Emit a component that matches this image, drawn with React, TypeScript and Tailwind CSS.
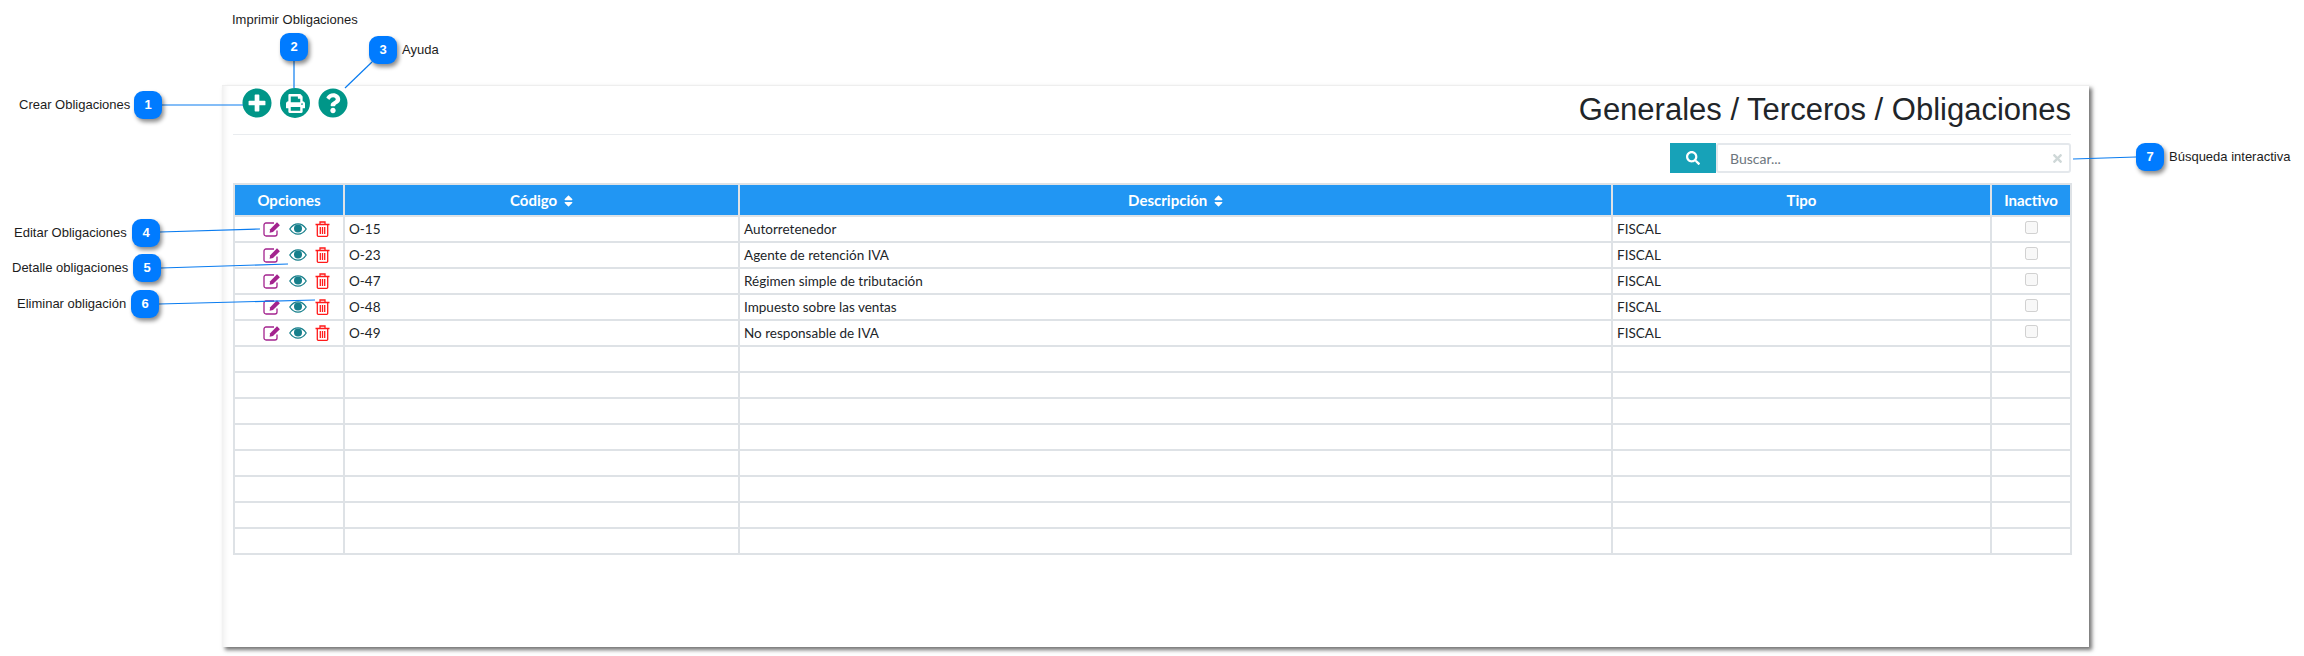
import React from 'react';
import { FaPlusCircle, FaPrint, FaQuestionCircle, FaSearch, FaSort, FaTimes } from 'react-icons/fa';

const rows = [
  { codigo: 'O-15', descripcion: 'Autorretenedor', tipo: 'FISCAL' },
  { codigo: 'O-23', descripcion: 'Agente de retención IVA', tipo: 'FISCAL' },
  { codigo: 'O-47', descripcion: 'Régimen simple de tributación', tipo: 'FISCAL' },
  { codigo: 'O-48', descripcion: 'Impuesto sobre las ventas', tipo: 'FISCAL' },
  { codigo: 'O-49', descripcion: 'No responsable de IVA', tipo: 'FISCAL' },
];

const emptyRows = [0, 1, 2, 3, 4, 5, 6, 7];

const callouts = [
  { n: 1, x: 134, y: 91, label: 'Crear Obligaciones', lx: 19, ly: 98 },
  { n: 2, x: 280, y: 33, label: 'Imprimir Obligaciones', lx: 232, ly: 13 },
  { n: 3, x: 369, y: 36, label: 'Ayuda', lx: 402, ly: 43 },
  { n: 4, x: 132, y: 219, label: 'Editar Obligaciones', lx: 14, ly: 226 },
  { n: 5, x: 133, y: 254, label: 'Detalle obligaciones', lx: 12, ly: 261 },
  { n: 6, x: 131, y: 290, label: 'Eliminar obligación', lx: 17, ly: 297 },
  { n: 7, x: 2136, y: 143, label: 'Búsqueda interactiva', lx: 2169, ly: 150 },
];

const lines = [
  [162, 105, 243, 105],
  [294, 61, 294, 88],
  [372, 62, 345, 88],
  [160, 232, 260, 229],
  [161, 268, 288, 264],
  [159, 304, 315, 300],
  [2073, 159, 2136, 157],
];

function Callouts() {
  return (
    <>
      <svg className="absolute left-0 top-0 pointer-events-none" width={2304} height={656}>
        {lines.map(([x1, y1, x2, y2], i) => (
          <line key={i} x1={x1} y1={y1} x2={x2} y2={y2} stroke="#0a7cf0" strokeWidth={1.2} />
        ))}
      </svg>
      {callouts.map((c) => (
        <React.Fragment key={c.n}>
          <div
            className="absolute w-[28px] h-[28px] rounded-[9px] bg-[#007bff] text-white flex items-center justify-center text-[13px] font-bold shadow-[2px_3px_4px_rgba(0,0,0,0.45)] font-['Liberation_Sans',sans-serif]"
            style={{ left: c.x, top: c.y }}
          >
            {c.n}
          </div>
          <span
            className="absolute text-[13px] leading-[14px] text-[#1c1c1c] whitespace-nowrap font-['Liberation_Sans',sans-serif]"
            style={{ left: c.lx, top: c.ly }}
          >
            {c.label}
          </span>
        </React.Fragment>
      ))}
    </>
  );
}

function EditIcon() {
  return (
    <svg width={18} height={16} viewBox="0 0 18 16" className="text-[#a3238e]">
      <path
        d="M14 9.5v3.5a2 2 0 0 1-2 2H3a2 2 0 0 1-2-2V4a2 2 0 0 1 2-2h8"
        fill="none"
        stroke="currentColor"
        strokeWidth={1.3}
      />
      <path d="M7.2 8.3 14 1.3l2.9 2.9-6.9 6.9-3.4.6z" fill="currentColor" />
    </svg>
  );
}

function EyeIcon() {
  return (
    <svg width={18} height={12} viewBox="0 0 18 12" className="text-[#167f8b]">
      <path
        d="M.8 6C3 2.6 5.8.8 9 .8s6 1.8 8.2 5.2C15 9.4 12.2 11.2 9 11.2S3 9.4.8 6z"
        fill="none"
        stroke="currentColor"
        strokeWidth={1.3}
      />
      <circle cx={9} cy={5.6} r={4} fill="currentColor" />
    </svg>
  );
}

function TrashIcon() {
  return (
    <svg width={15} height={16} viewBox="0 0 15 16" fill="none" stroke="#ff1a1a" strokeWidth={1.3}>
      <path d="M.5 3.5h14M5 3.3V1h5v2.3" />
      <path d="M2.3 3.5v10.7a1.2 1.2 0 0 0 1.2 1.2h8a1.2 1.2 0 0 0 1.2-1.2V3.5" />
      <path d="M5.3 6v7M7.5 6v7M9.7 6v7" />
    </svg>
  );
}

function Opciones() {
  return (
    <div className="flex items-center justify-center gap-[8px] pl-[15px]">
      <EditIcon />
      <EyeIcon />
      <TrashIcon />
    </div>
  );
}

function SortIcon() {
  return <FaSort className="inline w-[9px] h-[14px] ml-[3px] mb-[2px]" />;
}

export default function App() {
  const cell = 'border-2 border-[#dee2e6] px-[4px] py-0 text-[13.5px] text-[#212529] align-middle';
  const head = 'border-2 border-[#dee2e6] bg-[#2196f3] text-white text-[15px] font-bold text-center align-middle p-0';

  return (
    <div className="relative w-[2304px] h-[656px] bg-white overflow-hidden font-['Lato',sans-serif]">
      <div className="pt-[85px] pl-[222px]">
        <div className="w-[1867px] h-[562px] bg-white pl-[11px] pr-[18px] border-t border-[#eeeeee] shadow-[3px_3px_4px_rgba(0,0,0,0.55),inset_8px_0_6px_-6px_rgba(0,0,0,0.08)]">
          <div className="h-[49px] flex justify-between border-b border-[#e9ecef]">
            <div className="flex gap-[8px] pt-[2px] pl-[9px]">
              <FaPlusCircle className="w-[30px] h-[30px] text-[#009688]" />
              <span className="w-[30px] h-[30px] rounded-full bg-[#009688] flex items-center justify-center">
                <FaPrint className="w-[19px] h-[19px] text-white" />
              </span>
              <FaQuestionCircle className="w-[30px] h-[30px] text-[#009688]" />
            </div>
            <h1 className="text-[31px] leading-[38px] pt-[5px] text-[#212529] font-['Liberation_Sans',sans-serif]">
              Generales / Terceros / Obligaciones
            </h1>
          </div>

          <div className="flex justify-end mt-[8px]">
            <button className="w-[46px] h-[30px] bg-[#17a2b8] text-white flex items-center justify-center">
              <FaSearch className="w-[14px] h-[14px]" />
            </button>
            <div className="w-[355px] h-[30px] border-2 border-[#e4e8ec] rounded-[3px] flex items-center justify-between pl-[12px] pr-[5px]">
              <span className="text-[14px] text-[#6c757d]">Buscar...</span>
              <FaTimes className="w-[13px] h-[13px] text-[#cfd8d8]" />
            </div>
          </div>

          <table className="mt-[10px] w-[1837px] table-fixed border-collapse">
            <colgroup>
              <col className="w-[110px]" />
              <col className="w-[395px]" />
              <col className="w-[873px]" />
              <col className="w-[379px]" />
              <col className="w-[80px]" />
            </colgroup>
            <thead>
              <tr className="h-[32px]">
                <th className={head}>Opciones</th>
                <th className={head}>
                  Código <SortIcon />
                </th>
                <th className={head}>
                  Descripción <SortIcon />
                </th>
                <th className={head}>Tipo</th>
                <th className={head}>Inactivo</th>
              </tr>
            </thead>
            <tbody>
              {rows.map((r) => (
                <tr key={r.codigo} className="h-[26px]">
                  <td className={cell}>
                    <Opciones />
                  </td>
                  <td className={cell}>{r.codigo}</td>
                  <td className={cell}>{r.descripcion}</td>
                  <td className={cell}>{r.tipo}</td>
                  <td className={cell + ' text-center'}>
                    <input type="checkbox" disabled className="align-middle mb-[6px]" />
                  </td>
                </tr>
              ))}
              {emptyRows.map((i) => (
                <tr key={i} className="h-[26px]">
                  <td className={cell}></td>
                  <td className={cell}></td>
                  <td className={cell}></td>
                  <td className={cell}></td>
                  <td className={cell}></td>
                </tr>
              ))}
            </tbody>
          </table>
        </div>
      </div>
      <Callouts />
    </div>
  );
}
